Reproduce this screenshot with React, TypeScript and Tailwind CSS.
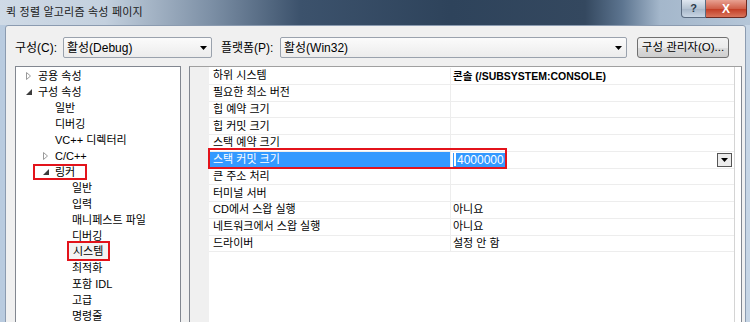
import React from "react";

const FONT = '"Liberation Sans", "Noto Sans CJK KR", sans-serif';

function DownTri({ className = "" }: { className?: string }) {
  return (
    <svg width="7" height="4" viewBox="0 0 7 4" className={className}>
      <path d="M0 0 H7 L3.5 4 Z" fill="#000" />
    </svg>
  );
}

function Combo({ text, w }: { text: string; w: string }) {
  return (
    <div
      className={`${w} h-[21px] flex items-center justify-between rounded-[2px] border border-[#9aa2ad] bg-[linear-gradient(#fbfbfb,#ececec)] pl-[3px] pr-[4px]`}
    >
      <span className="text-[12px] text-black leading-none">{text}</span>
      <DownTri />
    </div>
  );
}

function Expander({ open }: { open: boolean }) {
  return open ? (
    <svg width="6" height="6" viewBox="0 0 6 6">
      <path d="M6 0 V6 H0 Z" fill="#3c3c3c" />
    </svg>
  ) : (
    <svg width="5" height="8" viewBox="0 0 5 8">
      <path d="M0.5 0.5 L4.5 4 L0.5 7.5 Z" fill="none" stroke="#9a9a9a" strokeWidth="1" />
    </svg>
  );
}

type TreeItem = { label: string; level: number; exp?: "open" | "closed" };

const tree: TreeItem[] = [
  { label: "공용 속성", level: 0, exp: "closed" },
  { label: "구성 속성", level: 0, exp: "open" },
  { label: "일반", level: 1 },
  { label: "디버깅", level: 1 },
  { label: "VC++ 디렉터리", level: 1 },
  { label: "C/C++", level: 1, exp: "closed" },
  { label: "링커", level: 1, exp: "open" },
  { label: "일반", level: 2 },
  { label: "입력", level: 2 },
  { label: "매니페스트 파일", level: 2 },
  { label: "디버깅", level: 2 },
  { label: "시스템", level: 2 },
  { label: "최적화", level: 2 },
  { label: "포함 IDL", level: 2 },
  { label: "고급", level: 2 },
  { label: "명령줄", level: 2 },
];

const textLeft: Record<number, string> = { 0: "pl-[22px]", 1: "pl-[39px]", 2: "pl-[56px]" };
const expLeft: Record<number, string> = { 0: "pl-[10px]", 1: "pl-[27px]", 2: "pl-[44px]" };

const props: { name: string; value: string; bold?: boolean }[] = [
  { name: "하위 시스템", value: "콘솔 (/SUBSYSTEM:CONSOLE)", bold: true },
  { name: "필요한 최소 버전", value: "" },
  { name: "힙 예약 크기", value: "" },
  { name: "힙 커밋 크기", value: "" },
  { name: "스택 예약 크기", value: "" },
  { name: "스택 커밋 크기", value: "4000000" },
  { name: "큰 주소 처리", value: "" },
  { name: "터미널 서버", value: "" },
  { name: "CD에서 스왑 실행", value: "아니요" },
  { name: "네트워크에서 스왑 실행", value: "아니요" },
  { name: "드라이버", value: "설정 안 함" },
];

export default function App() {
  return (
    <div
      className="w-[750px] h-[322px] overflow-hidden flex flex-col bg-[linear-gradient(to_right,#b9cbdf,#c6d5e5)] text-black"
      style={{ fontFamily: FONT }}
    >
      {/* Title bar */}
      <div className="h-[25px] shrink-0 flex items-start justify-between bg-[linear-gradient(to_right,#cfdae6_0%,#c3d0de_14%,#7d90a6_28%,#3c526c_40%,#2e435b_60%,#34485f_78%,#5d7590_83%,#a4b7cb_88%,#b5c6d8_100%)]">
        <div className="pl-[6px] pt-[5px] text-[11px] leading-[14px] text-[#1a1a1a] tracking-[0.2px]">
          퀵 정렬 알고리즘 속성 페이지
        </div>
        <div className="flex mr-[3px]">
          <div className="w-[25px] h-[18px] flex items-center justify-center rounded-bl-[4px] border border-t-0 border-[#5a6b80] bg-[linear-gradient(#dfe7f0,#b6c4d3_50%,#a5b5c7_51%,#c9d6e4)] text-[11px] font-bold text-[#2b3a4a] leading-none">
            ?
          </div>
          <div className="w-[41px] h-[18px] flex items-center justify-center rounded-br-[4px] border border-t-0 border-l-0 border-[#6b2a22] bg-[linear-gradient(#e8a192,#d0604a_50%,#c13a22_51%,#d9755c)] text-[12px] font-bold text-white leading-none">
            X
          </div>
        </div>
      </div>

      {/* Body */}
      <div className="flex-1 ml-[5px] mr-[4px] rounded-tl-[3px] rounded-tr-[3px] border border-[#8b9bb0] bg-[#f0f0f0] flex flex-col">
        {/* Top row */}
        <div className="flex items-center mt-[11px] pl-[9px] h-[21px]">
          <span className="w-[48px] text-[12px] leading-none">구성(C):</span>
          <Combo text="활성(Debug)" w="w-[149px]" />
          <span className="ml-[9px] w-[59px] text-[12px] leading-none">플랫폼(P):</span>
          <Combo text="활성(Win32)" w="w-[347px]" />
          <div className="ml-[10px] w-[92px] h-[21px] flex items-center justify-center rounded-[3px] border border-[#707070] bg-[linear-gradient(#f2f2f2,#ebebeb_50%,#dddddd_51%,#cfcfcf)] text-[11.5px] leading-none">
            구성 관리자(O)...
          </div>
        </div>

        {/* Panels */}
        <div className="flex mt-[8px] pl-[9px] flex-1">
          {/* Tree */}
          <div className="relative w-[166px] border border-[#828790] bg-white pt-[1px]">
            {tree.map((t, i) => (
              <div key={i} className="relative h-[16px] flex items-center text-[11px]">
                {t.exp && (
                  <div className={`absolute left-0 top-0 h-[16px] flex items-center ${expLeft[t.level]}`}>
                    <Expander open={t.exp === "open"} />
                  </div>
                )}
                <span className={`${textLeft[t.level]} leading-none whitespace-nowrap`}>{t.label}</span>
              </div>
            ))}
            {/* annotation boxes */}
            <div className="absolute left-[17px] top-[97px] w-[54px] h-[16px] border-[2.5px] border-[#e3131b]" />
            <div className="absolute left-[51px] top-[174px] w-[43px] h-[20px] border-[2.5px] border-[#e3131b] bg-[#f3f3f3] flex items-center pl-[4px] text-[11px] leading-none">
              시스템
            </div>
          </div>

          {/* Property grid */}
          <div className="relative ml-[8px] w-[553px] border border-[#828790] border-t-[#a0a0a0] bg-white flex">
            <div className="w-[19px] bg-[#f0f0f0]" />
            <div className="w-[526px] border-r border-[#d4d4d4] pt-[1px]">
              {props.map((p, i) => {
                const sel = i === 5;
                return (
                  <div key={i} className="h-[16.75px] flex border-b border-[#ededed] text-[11px]">
                    <div
                      className={`w-[242px] border-r border-[#ededed] flex items-center pl-[4px] ${
                        sel ? "bg-[#3399ff] text-white" : ""
                      }`}
                    >
                      <span className="leading-none whitespace-nowrap">{p.name}</span>
                    </div>
                    <div className="flex-1 flex items-center pl-[2px] pr-[2px] justify-between">
                      {sel ? (
                        <>
                          <span className="flex items-center h-[14px] bg-[#3399ff] text-white text-[12px] leading-none pl-[1px] pr-[1px]">
                            <span className="inline-block w-[2px] h-[13px] bg-white mr-[1px]" />
                            4000000
                          </span>
                          <div className="w-[15px] h-[14px] flex items-center justify-center border border-[#555] bg-[#ececec]">
                            <DownTri />
                          </div>
                        </>
                      ) : (
                        <span
                          className={`leading-none whitespace-nowrap ${p.bold ? "font-bold text-[10.5px]" : ""}`}
                        >
                          {p.value}
                        </span>
                      )}
                    </div>
                  </div>
                );
              })}
            </div>
            <div className="flex-1" />
            {/* annotation box */}
            <div className="absolute left-[18px] top-[81px] w-[299px] h-[21px] border-[2.5px] border-[#e3131b]" />
          </div>
        </div>
      </div>
    </div>
  );
}
